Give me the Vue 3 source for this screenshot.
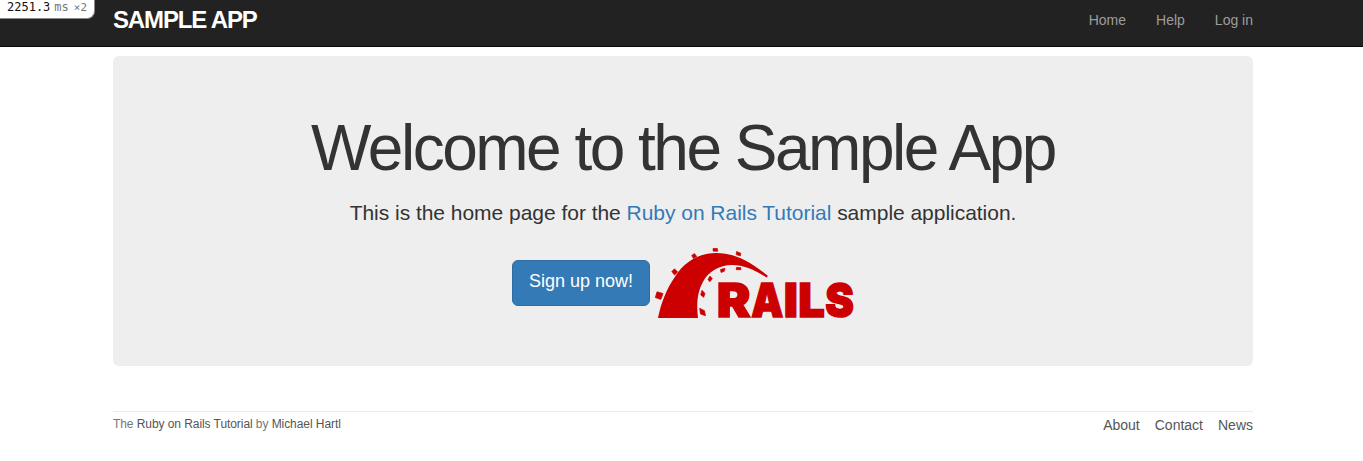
<script setup>
const navLinks = ['Home', 'Help', 'Log in']
const footerLinks = ['About', 'Contact', 'News']
const wordmark = [
  { c: 'R', x: 716.8, w: 33.8 },
  { c: 'A', x: 751.2, w: 32 },
  { c: 'I', x: 783.7, w: 14.2 },
  { c: 'L', x: 798.3, w: 26.5 },
  { c: 'S', x: 825.2, w: 28.6 },
]
</script>

<template>
  <div class="page">
    <div class="profiler"><span class="time">2251.3</span><span class="unit">ms</span><span class="count">×2</span></div>
    <header class="navbar">
      <div class="container bar">
        <a class="brand">SAMPLE APP</a>
        <nav class="nav"><a v-for="l in navLinks" :key="l">{{ l }}</a></nav>
      </div>
    </header>
    <main class="container">
      <section class="jumbotron">
        <h1>Welcome to the Sample App</h1>
        <h2>This is the home page for the <a>Ruby on Rails Tutorial</a> sample application.</h2>
        <div class="actions">
          <a class="btn">Sign up now!</a>
          <svg class="logo" width="200" height="71" viewBox="654 248 200 71" fill="#c00">
            <path d="M658 318C661 303 667 288 675 276.7C684 262 699 253 716 253C734 253 750 261 768 276L766.5 277.5C755 270 744 265 732 265C719 265 708 272 703 281.7C698 291 696 302 698 318Z" />
            <path class="studs" d="M657 291.8L663 293.5L660.8 299.5L655.3 297.5ZM674.5 268.8L677.7 272L674.5 275L671.8 271.5ZM694.5 253.6L696.7 256.5L693.5 258.5L691.7 255.5ZM713 248.5H717.3L717.8 251.2H713.2ZM736.5 251.5L740.8 253.2L740.3 256L736.2 254.5ZM720.5 269.5L725 268.3L724.3 271.3L721 272.5ZM736.3 267.5H740.7L741 269.7H736.3ZM710 276L712.3 278.7L709.8 281.8L708 279.5ZM702 290.3L705 293.5L703.7 297.3L700.7 295ZM699.7 308.3L704.5 310.7L705.5 315.7L700.5 314Z" />
            <text v-for="g in wordmark" :key="g.c" :x="g.x" y="317.3" :textLength="g.w" lengthAdjust="spacingAndGlyphs">{{ g.c }}</text>
          </svg>
        </div>
      </section>
      <footer class="footer">
        <small>The <a>Ruby on Rails Tutorial</a> by <a>Michael Hartl</a></small>
        <nav><a v-for="l in footerLinks" :key="l">{{ l }}</a></nav>
      </footer>
    </main>
  </div>
</template>

<style>
body { margin: 0; background: #fff; }
</style>
<style scoped>
.page { position: relative; height: 461px; overflow: hidden; font: 14px/20px "Nimbus Sans", "Helvetica Neue", Helvetica, "Liberation Sans", Arial, sans-serif; color: #333; }
.container { width: 1140px; margin-left: 113px; }
.navbar { height: 46px; background: #222; border-bottom: 1px solid #080808; }
.bar { display: flex; justify-content: space-between; }
.brand { color: #fff; font-size: 24px; font-weight: 700; letter-spacing: -1.15px; line-height: 20px; margin-top: 10px; }
.nav { display: flex; gap: 30px; color: #9d9d9d; margin-top: 10px; }
.profiler { position: absolute; left: 0; top: 0; box-sizing: border-box; width: 95px; height: 19px; padding-left: 7px; background: #fff; border: solid #888; border-width: 0 1px 1px 0; border-radius: 0 0 8px 0; font: 12px/14px "DejaVu Sans Mono", monospace; color: #111; white-space: nowrap; }
.unit { margin-left: 4px; color: #777; }
.count { margin-left: 5px; color: #777; font-size: 11px; }
.jumbotron { box-sizing: border-box; height: 310px; margin-top: 9px; padding-top: 57px; background: #eee; border-radius: 6px; text-align: center; }
h1 { margin: 0; font-size: 64px; line-height: 70px; font-weight: 400; letter-spacing: -2.5px; }
h2 { margin: 18px 0 0; font-size: 21px; line-height: 24px; font-weight: 400; letter-spacing: -0.03px; }
h2 a { color: #337ab7; }
.actions { display: flex; gap: 4px; margin: 23px 0 0 399px; }
.btn { box-sizing: border-box; width: 138px; height: 46px; margin-top: 12px; padding-top: 8px; border: 1px solid #2e6da4; border-radius: 6px; background: #337ab7; color: #fff; font-size: 18px; line-height: 24px; }
.logo { display: block; overflow: visible; }
.studs { stroke: #c00; stroke-width: 0.7px; }
.logo text { font: 900 47px Inter, "Liberation Sans", sans-serif; stroke: #c00; stroke-width: 1.5px; }
.footer { display: flex; justify-content: space-between; margin-top: 45px; padding-top: 3px; border-top: 1px solid #eaeaea; color: #777; }
.footer small { font-size: 12px; line-height: 18px; letter-spacing: -0.07px; }
.footer a { color: #555; }
.footer nav { display: flex; gap: 15px; }
</style>
